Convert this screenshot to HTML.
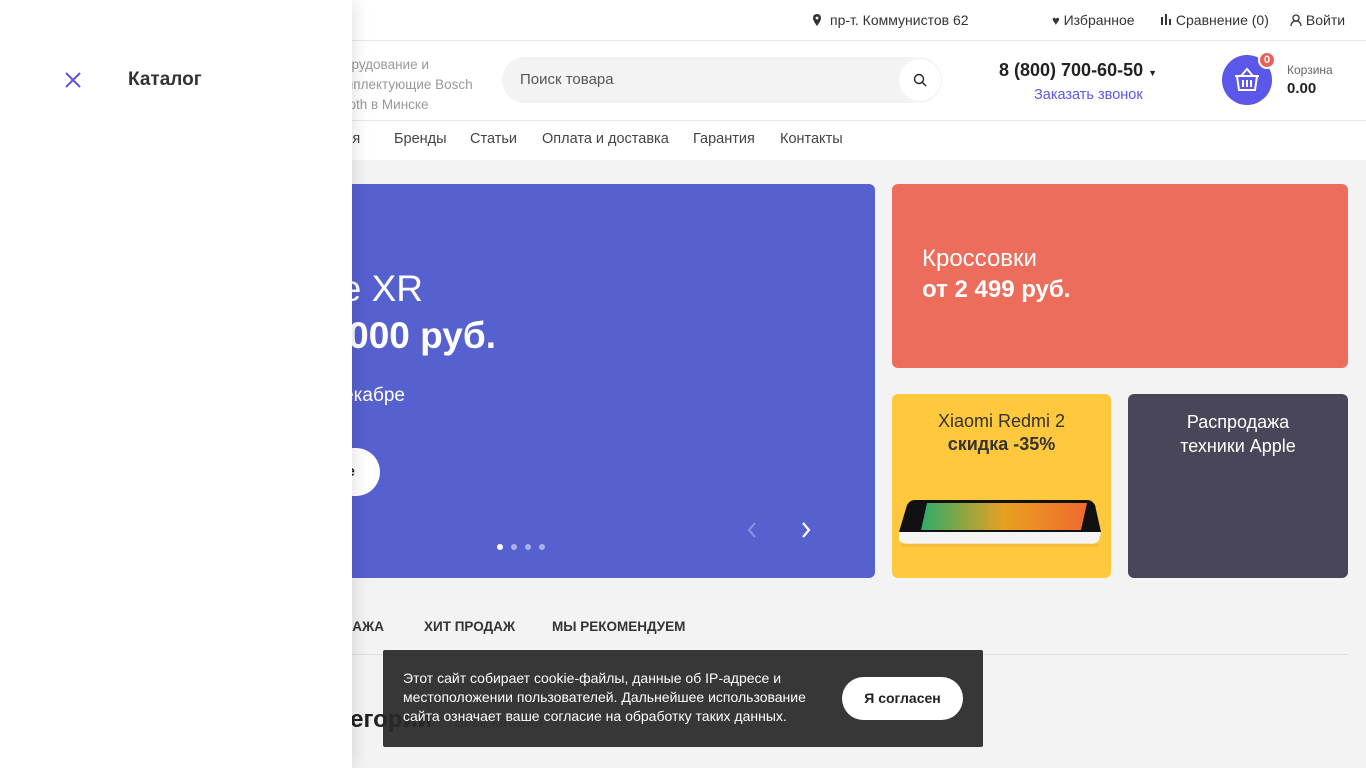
<!DOCTYPE html>
<html><head><meta charset="utf-8"><style>
*{box-sizing:border-box;margin:0;padding:0}
body{width:1366px;height:768px;overflow:hidden;background:#f3f3f3;font-family:"Liberation Sans",sans-serif;color:#333;position:relative}
.abs{position:absolute}
.top{left:0;top:0;width:1366px;height:41px;background:#fff;border-bottom:1px solid #e6e6e6}
.hdr{left:0;top:41px;width:1366px;height:80px;background:#fff;border-bottom:1px solid #e6e6e6}
.nav{left:0;top:121px;width:1366px;height:39px;background:#fff}
.t14{font-size:14px;white-space:nowrap}
.n{position:absolute;top:131px;font-size:14.5px;color:#444;white-space:nowrap}
.tb{position:absolute;top:619px;font-size:13.5px;font-weight:bold;color:#333;white-space:nowrap}
.drawer{left:0;top:0;width:352px;height:768px;background:#fff;box-shadow:0 0 18px rgba(0,0,0,.15);z-index:10}
.card{border-radius:6px;overflow:hidden}
</style></head><body>
<div class="abs top"></div>
<div class="abs t14" style="left:812px;top:12px;color:#333"><svg width="10" height="12" viewBox="0 0 10 12" style="margin-right:8px;vertical-align:-1px"><path d="M5 0C2.5 0 1 1.8 1 4c0 3 4 8 4 8s4-5 4-8c0-2.2-1.5-4-4-4z" fill="#333"/><circle cx="5" cy="4" r="1.4" fill="#fff"/></svg>пр-т. Коммунистов 62</div>
<div class="abs t14" style="left:1052px;top:12px"><span style="font-size:13px">♥</span> Избранное</div>
<div class="abs t14" style="left:1160px;top:12px"><svg width="12" height="12" style="vertical-align:-1px"><rect x="1" y="3" width="2" height="8" fill="#333"/><rect x="5" y="0" width="2" height="11" fill="#333"/><rect x="9" y="5" width="2" height="6" fill="#333"/></svg> Сравнение (0)</div>
<div class="abs t14" style="left:1290px;top:12px"><svg width="12" height="12" style="vertical-align:-1px"><circle cx="6" cy="4" r="3" fill="none" stroke="#333" stroke-width="1.3"/><path d="M1 12c0-3 2-5 5-5s5 2 5 5" fill="none" stroke="#333" stroke-width="1.3"/></svg> Войти</div>

<div class="abs hdr"></div>
<div class="abs" style="left:300px;width:178px;text-align:left;top:55px;font-size:13.5px;line-height:20px;color:#999;white-space:nowrap"><div style="margin-left:44px">орудование и</div><div style="margin-left:44px">мплектующие Bosch</div><div style="margin-left:44px">roth в Минске</div></div>
<div class="abs" style="left:502px;top:57px;width:440px;height:46px;border-radius:23px;background:#f3f3f3"></div>
<div class="abs t14" style="left:520px;top:71px;font-size:15px;color:#555">Поиск товара</div>
<div class="abs" style="left:899px;top:59px;width:42px;height:42px;border-radius:50%;background:#fff"><svg width="14" height="14" style="position:absolute;left:14px;top:14px"><circle cx="6" cy="6" r="4.5" fill="none" stroke="#222" stroke-width="1.4"/><path d="M9.3 9.3L13 13" stroke="#222" stroke-width="1.4"/></svg></div>
<div class="abs" style="left:999px;top:60px;font-size:18px;font-weight:bold;color:#222;white-space:nowrap">8 (800) 700-60-50 <span style="font-size:9px">▼</span></div>
<div class="abs t14" style="left:1034px;top:87px;color:#5b57e8;font-size:14.5px">Заказать звонок</div>
<div class="abs" style="left:1222px;top:55px;width:50px;height:50px;border-radius:50%;background:#5b57e8"><svg width="28" height="26" viewBox="0 0 28 26" style="position:absolute;left:11px;top:12px"><path d="M8 9l6-7 6 7" fill="none" stroke="#fff" stroke-width="2"/><path d="M2 9h24M4 9l2 14h16l2-14M10 13v7M14 13v7M18 13v7" fill="none" stroke="#fff" stroke-width="2"/></svg></div>
<div class="abs" style="left:1258px;top:51px;width:18px;height:18px;border-radius:50%;background:#ec5d5d;border:2px solid #fff;color:#fff;font-size:11px;font-weight:bold;text-align:center;line-height:14px">0</div>
<div class="abs" style="left:1287px;top:63px;font-size:12px;color:#666">Корзина</div>
<div class="abs" style="left:1287px;top:80px;font-size:15px;font-weight:bold;color:#222">0.00</div>

<div class="abs nav"></div>
<div class="n" style="left:320px">Акция</div>
<div class="n" style="left:394px">Бренды</div>
<div class="n" style="left:470px">Статьи</div>
<div class="n" style="left:542px">Оплата и доставка</div>
<div class="n" style="left:693px">Гарантия</div>
<div class="n" style="left:780px">Контакты</div>

<div class="abs card" style="left:40px;top:184px;width:835px;height:394px;background:#5660cf">
<div class="abs" style="right:452px;top:84px;color:#fff;font-size:37px;white-space:nowrap">Apple iPhone XR</div>
<div class="abs" style="right:379px;top:131px;color:#fff;font-size:37px;font-weight:bold;white-space:nowrap">от 49 000 руб.</div>
<div class="abs" style="right:470px;top:201px;color:#fff;font-size:19px;white-space:nowrap">Только в декабре</div>
<div class="abs" style="left:200px;top:264px;width:140px;height:48px;border-radius:24px;background:#fff;font-size:15px;font-weight:bold;color:#222;text-align:right;padding-right:25px;line-height:48px">Подробнее</div>
<div class="abs" style="left:457px;top:360px;width:6px;height:6px;border-radius:50%;background:#fff"></div>
<div class="abs" style="left:471px;top:360px;width:6px;height:6px;border-radius:50%;background:#aab0e8"></div>
<div class="abs" style="left:485px;top:360px;width:6px;height:6px;border-radius:50%;background:#aab0e8"></div>
<div class="abs" style="left:499px;top:360px;width:6px;height:6px;border-radius:50%;background:#aab0e8"></div>
<svg class="abs" style="left:706px;top:338px" width="12" height="16"><path d="M9 1L3 8l6 7" fill="none" stroke="#8d93dd" stroke-width="2"/></svg>
<svg class="abs" style="left:760px;top:338px" width="12" height="16"><path d="M3 1l6 7-6 7" fill="none" stroke="#fff" stroke-width="2.2"/></svg>
</div>

<div class="abs card" style="left:892px;top:184px;width:456px;height:184px;background:#ec6d5c">
<div class="abs" style="left:30px;top:61px;color:#fff;font-size:24px">Кроссовки</div>
<div class="abs" style="left:30px;top:92px;color:#fff;font-size:24px;font-weight:bold">от 2 499 руб.</div>
</div>
<div class="abs card" style="left:892px;top:394px;width:219px;height:184px;background:#ffc83d">
<div class="abs" style="left:0;width:219px;top:17px;text-align:center;font-size:18px;color:#333">Xiaomi Redmi 2</div>
<div class="abs" style="left:0;width:219px;top:40px;text-align:center;font-size:18px;font-weight:bold;color:#333">скидка -35%</div>
<svg class="abs" style="left:5px;top:104px" width="210" height="52" viewBox="0 0 210 52"><path d="M18 2h172c4 0 6 2 8 5l6 27H2l8-27c2-3 4-5 8-5z" fill="#111"/><path d="M30 5h160l-6 27H24z" fill="url(#g)"/><path d="M2 34h202l-2 8c-2 3-4 4-8 4H12c-4 0-8-1-10-4z" fill="#f4f4f4"/><path d="M4 47h198" stroke="#e6b030" stroke-width="3" opacity=".5"/><defs><linearGradient id="g" x1="0" x2="1"><stop offset="0" stop-color="#2faa6a"/><stop offset=".5" stop-color="#e8a020"/><stop offset="1" stop-color="#f06a30"/></linearGradient></defs></svg>
</div>
<div class="abs card" style="left:1128px;top:394px;width:220px;height:184px;background:#4a4659">
<div class="abs" style="left:0;width:220px;top:16px;text-align:center;font-size:18px;color:#fff;line-height:24px">Распродажа<br>техники Apple</div>
</div>

<div class="tb" style="right:982px">РАСПРОДАЖА</div>
<div class="tb" style="left:424px">ХИТ ПРОДАЖ</div>
<div class="tb" style="left:552px">МЫ РЕКОМЕНДУЕМ</div>
<div class="abs" style="left:40px;top:654px;width:1308px;height:1px;background:#e0e0e0"></div>
<div class="abs" style="right:934px;top:706px;font-size:24px;font-weight:bold;color:#222;white-space:nowrap">Популярные категории</div>
<div class="abs" style="left:454px;top:714px;font-size:15px;color:#999;white-space:nowrap">Весь каталог</div>

<div class="abs" style="left:383px;top:650px;width:600px;height:97px;background:rgba(40,40,40,.93);border-radius:2px;z-index:5">
<div class="abs" style="left:20px;top:19px;width:430px;font-size:14px;line-height:19px;color:#fff">Этот сайт собирает cookie-файлы, данные об IP-адресе и местоположении пользователей. Дальнейшее использование сайта означает ваше согласие на обработку таких данных.</div>
<div class="abs" style="left:459px;top:27px;width:121px;height:43px;border-radius:22px;background:#fff;text-align:center;line-height:43px;font-size:14px;font-weight:bold;color:#222">Я согласен</div>
</div>

<div class="abs drawer">
<svg class="abs" style="left:65px;top:72px" width="16" height="16"><path d="M1 1l14 14M15 1L1 15" stroke="#5b57e8" stroke-width="2"/></svg>
<div class="abs" style="left:128px;top:69px;font-size:19px;font-weight:bold;color:#333">Каталог</div>
</div>
</body></html>
